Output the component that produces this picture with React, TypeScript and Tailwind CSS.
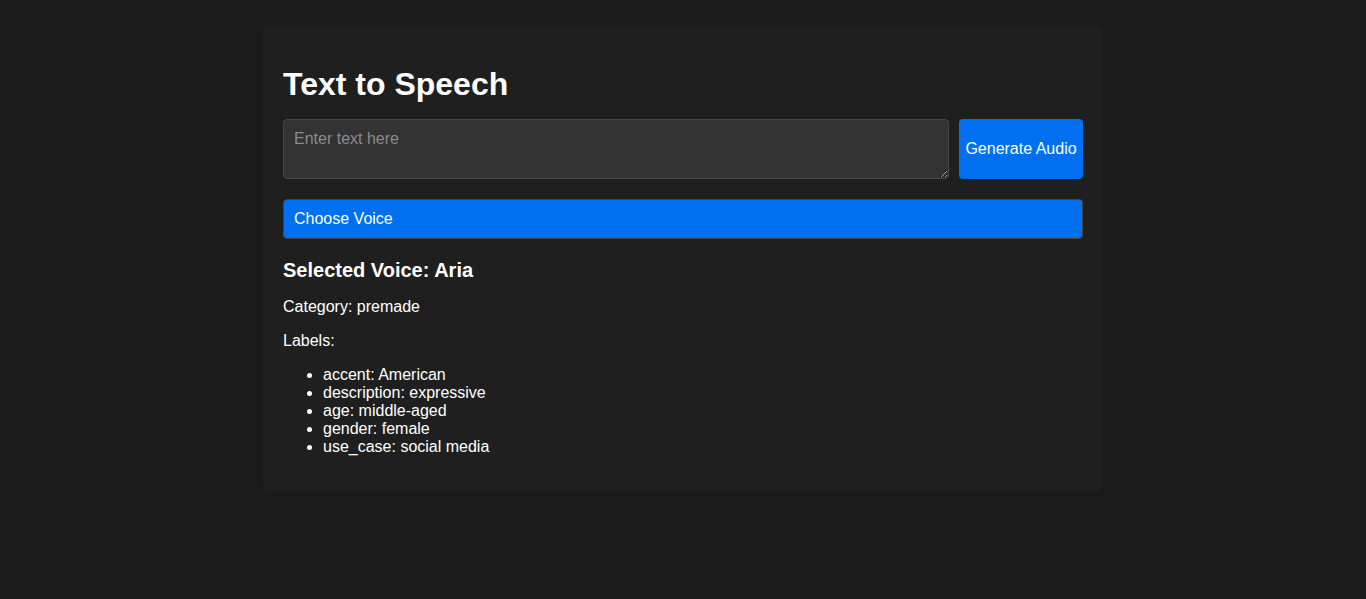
import React from "react";

export default function App() {
  const labels = [
    ["accent", "American"],
    ["description", "expressive"],
    ["age", "middle-aged"],
    ["gender", "female"],
    ["use_case", "social media"],
  ];
  return (
    <div
      className="min-h-[599px] w-full bg-[#1a1a1a] pt-[25px] text-white"
      style={{ fontFamily: '"Liberation Sans", Arial, sans-serif' }}
    >
      <div className="mx-auto w-[840px] rounded-[8px] bg-[#1f1f1f] px-[20px] pt-[41px] pb-[20px]">
        <h1 className="mb-[16px] text-[32px] font-bold leading-[37px]">Text to Speech</h1>
        <div className="flex gap-[10px]">
          <textarea
            placeholder="Enter text here"
            className="h-[60px] flex-1 rounded-[4px] border border-[#474747] bg-[#333333] px-[10px] py-[10px] text-[16px] leading-[18px] text-white placeholder:text-[#8a8a8a] outline-none"
          />
          <button className="h-[60px] w-[124px] shrink-0 rounded-[4px] bg-[#0070f0] px-[4px] text-[16px] text-white">
            Generate Audio
          </button>
        </div>
        <button className="mt-[20px] flex h-[40px] w-full items-center rounded-[4px] border border-[#444444] bg-[#0070f0] px-[10px] text-left text-[16px] text-white">
          Choose Voice
        </button>
        <h3 className="mt-[20px] text-[20px] font-bold leading-[23px]">Selected Voice: Aria</h3>
        <p className="mt-[16px] text-[16px] leading-[18px]">Category: premade</p>
        <p className="mt-[16px] text-[16px] leading-[18px]">Labels:</p>
        <ul className="mt-[16px] mb-[16px] list-disc pl-[40px] text-[16px] leading-[18px]">
          {labels.map(([k, v]) => (
            <li key={k}>
              {k}: {v}
            </li>
          ))}
        </ul>
      </div>
    </div>
  );
}
